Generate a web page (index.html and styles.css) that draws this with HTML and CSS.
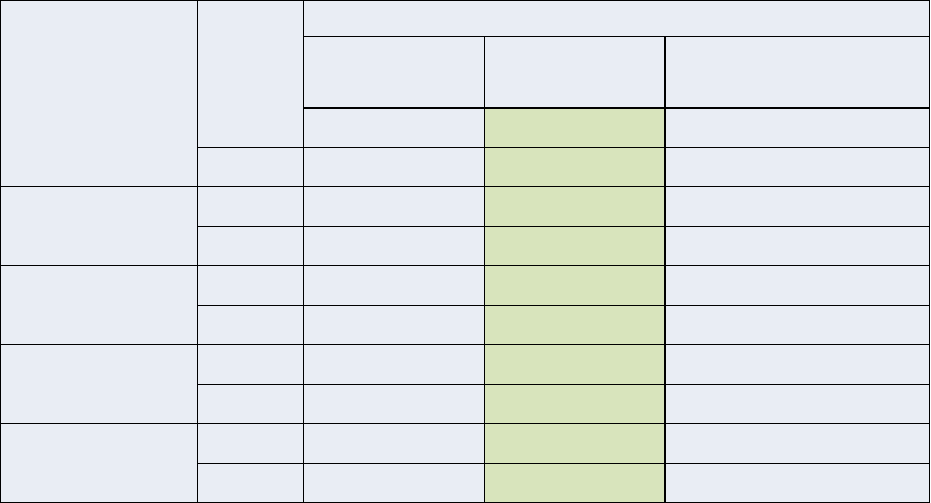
FILE: index.html
```html
<!DOCTYPE html>
<html>
<head>
<meta charset="utf-8">
<link rel="stylesheet" href="styles.css">
</head>
<body>
<div class="sheet">
  <div class="cell span-r4"></div>
  <div class="cell span-r3"></div>
  <div class="cell span-c3"></div>

  <div class="cell head"></div>
  <div class="cell head sep"></div>
  <div class="cell head"></div>

  <div class="cell"></div>
  <div class="cell green sep"></div>
  <div class="cell"></div>

  <div class="cell"></div>
  <div class="cell"></div>
  <div class="cell green sep"></div>
  <div class="cell"></div>

  <div class="cell span-r2"></div>
  <div class="cell"></div>
  <div class="cell"></div>
  <div class="cell green sep"></div>
  <div class="cell"></div>
  <div class="cell"></div>
  <div class="cell"></div>
  <div class="cell green sep"></div>
  <div class="cell"></div>

  <div class="cell span-r2"></div>
  <div class="cell"></div>
  <div class="cell"></div>
  <div class="cell green sep"></div>
  <div class="cell"></div>
  <div class="cell"></div>
  <div class="cell"></div>
  <div class="cell green sep"></div>
  <div class="cell"></div>

  <div class="cell span-r2"></div>
  <div class="cell"></div>
  <div class="cell"></div>
  <div class="cell green sep"></div>
  <div class="cell"></div>
  <div class="cell"></div>
  <div class="cell"></div>
  <div class="cell green sep"></div>
  <div class="cell"></div>

  <div class="cell span-r2"></div>
  <div class="cell"></div>
  <div class="cell"></div>
  <div class="cell green sep"></div>
  <div class="cell"></div>
  <div class="cell"></div>
  <div class="cell"></div>
  <div class="cell green sep"></div>
  <div class="cell"></div>
</div>
</body>
</html>
```
FILE: styles.css
```css
html, body {
  margin: 0;
  padding: 0;
  background: #ffffff;
  font-family: "Liberation Sans", Arial, sans-serif;
}

.sheet {
  display: grid;
  width: 930px;
  box-sizing: border-box;
  padding: 1px 0 1px 1px;
  background: #000000;
  gap: 1px;
  grid-template-columns: 196px 105px 180px 180px 263px;
  grid-template-rows: 35px 71px 38px 38px 39px 38px 39px 38px 39px 38px 39px 38px;
}

.cell {
  background: #e9edf4;
  box-sizing: border-box;
}

.span-r4 { grid-row: span 4; }
.span-r3 { grid-row: span 3; }
.span-r2 { grid-row: span 2; }
.span-c3 { grid-column: span 3; }

.head {
  border-bottom: 1px solid #000000;
}

.sep {
  border-right: 1px solid #000000;
}

.green {
  background: #d8e4bc;
}
```
